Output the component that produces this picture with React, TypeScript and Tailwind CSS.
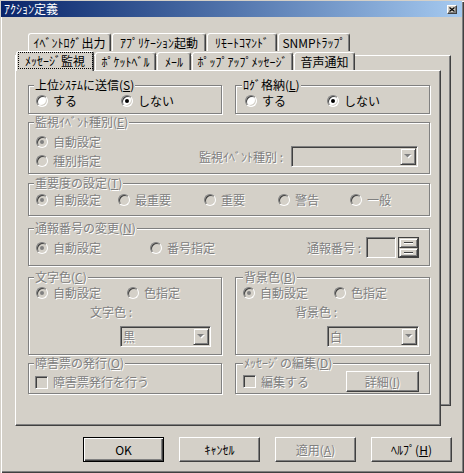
import React from 'react'

const dis = 'text-[#808080] [text-shadow:1px_1px_0_#fff]'
const sunken =
  'border border-t-[#808080] border-l-[#808080] border-r-white border-b-white shadow-[inset_1px_1px_0_#404040,inset_-1px_-1px_0_#d4d0c8]'
const raised =
  'border border-t-white border-l-white border-r-[#404040] border-b-[#404040] shadow-[inset_-1px_-1px_0_#808080]'
const scrollBtn =
  'border border-t-[#d4d0c8] border-l-[#d4d0c8] border-r-[#404040] border-b-[#404040] shadow-[inset_1px_1px_0_#fff,inset_-1px_-1px_0_#808080]'

const U = ({ c }: { c: string }) => <span className="underline underline-offset-1">{c}</span>

function Radio({
  label,
  checked = false,
  disabled = false,
  className = '',
}: {
  label: string
  checked?: boolean
  disabled?: boolean
  className?: string
}) {
  return (
    <div className={`flex h-[14px] shrink-0 items-center ${className}`}>
      <span
        className={`flex h-[12px] w-[12px] shrink-0 items-center justify-center rounded-full ${sunken} ${
          disabled ? 'bg-[#d4d0c8]' : 'bg-white'
        }`}
      >
        {checked && <span className={`h-[4px] w-[4px] rounded-full ${disabled ? 'bg-[#808080]' : 'bg-black'}`} />}
      </span>
      <span className={`ml-[5px] whitespace-nowrap ${disabled ? dis : ''}`}>{label}</span>
    </div>
  )
}

function Check({ label, className = '' }: { label: string; className?: string }) {
  return (
    <div className={`flex h-[14px] shrink-0 items-center ${className}`}>
      <span className={`h-[13px] w-[13px] shrink-0 bg-[#d4d0c8] ${sunken}`} />
      <span className={`ml-[5px] whitespace-nowrap ${dis}`}>{label}</span>
    </div>
  )
}

function Group({
  label,
  disabled = true,
  className = '',
  labelPos = 'left-[5px]',
  children,
}: {
  label: React.ReactNode
  disabled?: boolean
  className?: string
  labelPos?: string
  children?: React.ReactNode
}) {
  return (
    <div className={`relative shrink-0 border border-[#808080] shadow-[inset_1px_1px_0_#fff,1px_1px_0_#fff] ${className}`}>
      <span className={`absolute -top-[8px] ${labelPos} whitespace-nowrap bg-[#d4d0c8] px-[1px] ${disabled ? dis : ''}`}>
        {label}
      </span>
      {children}
    </div>
  )
}

function Arrow() {
  return (
    <svg width="8" height="5" viewBox="0 0 8 5">
      <polygon points="1,1 8,1 4.5,4.5" fill="#fff" />
      <polygon points="0,0 7,0 3.5,3.5" fill="#808080" />
    </svg>
  )
}

function Combo({ value = '', className = '' }: { value?: string; className?: string }) {
  return (
    <div className={`flex h-[21px] shrink-0 bg-[#d4d0c8] p-[1px] ${sunken} ${className}`}>
      <span className={`flex-1 pl-[1px] leading-[17px] ${dis}`}>{value}</span>
      <span className={`flex h-[17px] w-[16px] items-center justify-center ${scrollBtn}`}>
        <Arrow />
      </span>
    </div>
  )
}

function Tab({ label, className = '' }: { label: string; className?: string }) {
  return (
    <div
      className={`flex h-[18px] shrink-0 items-center justify-center rounded-t-[3px] border-t border-l border-r border-t-white border-l-white border-r-[#404040] bg-[#d4d0c8] shadow-[inset_-1px_0_0_#808080] whitespace-nowrap ${className}`}
    >
      {label}
    </div>
  )
}

function Button({ children, isDefault = false, disabled = false }: { children: React.ReactNode; isDefault?: boolean; disabled?: boolean }) {
  return (
    <div
      className={`flex h-[25px] w-[81px] items-center justify-center ${
        isDefault
          ? 'border border-black shadow-[inset_1px_1px_0_#fff,inset_-1px_-1px_0_#404040,inset_-2px_-2px_0_#808080]'
          : raised
      } ${disabled ? dis : ''}`}
    >
      {children}
    </div>
  )
}

export default function App() {
  return (
    <div className="relative h-[473px] w-[464px] overflow-hidden bg-[#d4d0c8] font-['Noto_Sans_CJK_JP',sans-serif] text-[12px] leading-[14px] text-black shadow-[inset_1px_1px_0_#d4d0c8,inset_2px_2px_0_#fff,inset_-1px_-1px_0_#404040,inset_-2px_-2px_0_#808080]">
      {/* title bar */}
      <div className="mt-[1px] mr-[2px] ml-[1px] flex h-[16px] items-center justify-between bg-linear-to-r from-[#0a246a] to-[#a6caf0] pr-[5px] pl-[3px]">
        <span className="text-white">ｱｸｼｮﾝ定義</span>
        <div className={`flex h-[9px] w-[10px] items-center justify-center bg-[#d4d0c8] ${raised}`}>
          <svg width="6" height="5" viewBox="0 0 6 5">
            <path d="M0.5 0.5L5.5 4.5M5.5 0.5L0.5 4.5" stroke="#000" strokeWidth="1.2" />
          </svg>
        </div>
      </div>

      <div className="mt-[16px] pl-[15px]">
        {/* back row of tabs */}
        <div className="ml-[13px] flex h-[18px] gap-[1px]">
          <Tab label="ｲﾍﾞﾝﾄﾛｸﾞ出力" className="w-[83px]" />
          <Tab label="ｱﾌﾟﾘｹｰｼｮﾝ起動" className="w-[94px]" />
          <Tab label="ﾘﾓｰﾄｺﾏﾝﾄﾞ" className="w-[70px]" />
          <Tab label="SNMPﾄﾗｯﾌﾟ" className="w-[72px]" />
        </div>

        <div className="relative">
          {/* page behind */}
          <div className="absolute top-[4px] bottom-[20px] left-0 w-[436px] border border-t-white border-l-white border-r-[#404040] border-b-[#404040] shadow-[inset_-1px_-1px_0_#808080]" />

          {/* front row of tabs */}
          <div className="relative ml-[1px] flex h-[19px] items-end gap-[1px]">
            <div className="relative z-10 -mb-[1px] flex h-[20px] w-[78px] shrink-0 justify-center rounded-t-[3px] border-t border-l border-r border-t-white border-l-white border-r-[#404040] bg-[#d4d0c8] shadow-[inset_-1px_0_0_#808080]">
              <span className="flex h-[17px] w-[75px] items-center justify-center border border-dotted border-black whitespace-nowrap">
                ﾒｯｾｰｼﾞ監視
              </span>
            </div>
            <Tab label="ﾎﾟｹｯﾄﾍﾞﾙ" className="w-[61px]" />
            <Tab label="ﾒｰﾙ" className="w-[34px]" />
            <Tab label="ﾎﾟｯﾌﾟｱｯﾌﾟﾒｯｾｰｼﾞ" className="w-[101px]" />
            <Tab label="音声通知" className="w-[61px]" />
          </div>

          {/* page */}
          <div className={`relative h-[356px] w-[426px] bg-[#d4d0c8] pt-[14px] pl-[12px] ${raised}`}>
            <div className="flex gap-[13px]">
              <Group
                disabled={false}
                label={
                  <>
                    上位ｼｽﾃﾑに送信(<U c="S" />)
                  </>
                }
                className="h-[29px] w-[194px] pt-[8px] pl-[7px]"
              >
                <div className="flex">
                  <Radio label="する" className="w-[85px]" />
                  <Radio label="しない" checked />
                </div>
              </Group>
              <Group
                disabled={false}
                labelPos="left-[6px]"
                label={
                  <>
                    ﾛｸﾞ格納(<U c="L" />)
                  </>
                }
                className="h-[29px] w-[195px] pt-[8px] pl-[9px]"
              >
                <div className="flex">
                  <Radio label="する" className="w-[82px]" />
                  <Radio label="しない" checked />
                </div>
              </Group>
            </div>

            <Group
              label={
                <>
                  監視ｲﾍﾞﾝﾄ種別(<U c="E" />)
                </>
              }
              className="mt-[8px] flex h-[52px] w-[402px] pt-[12px] pl-[7px]"
            >
              <div className="flex w-[163px] flex-col gap-[5px]">
                <Radio label="自動設定" checked disabled />
                <Radio label="種別指定" disabled />
              </div>
              <div className="mt-[11px] flex h-[21px] items-center">
                <span className={`w-[92px] whitespace-nowrap ${dis}`}>監視ｲﾍﾞﾝﾄ種別 :</span>
                <Combo className="w-[127px]" />
              </div>
            </Group>

            <Group
              label={
                <>
                  重要度の設定(<U c="T" />)
                </>
              }
              className="mt-[9px] flex h-[33px] w-[402px] pt-[9px] pl-[7px]"
            >
              <Radio label="自動設定" checked disabled className="w-[82px]" />
              <Radio label="最重要" disabled className="w-[86px]" />
              <Radio label="重要" disabled className="w-[74px]" />
              <Radio label="警告" disabled className="w-[72px]" />
              <Radio label="一般" disabled />
            </Group>

            <Group
              label={
                <>
                  通報番号の変更(<U c="N" />)
                </>
              }
              className="mt-[12px] h-[38px] w-[402px] pt-[8px] pr-[10px] pl-[7px]"
            >
              <div className="flex h-[21px] items-center">
                <Radio label="自動設定" checked disabled className="w-[114px]" />
                <Radio label="番号指定" disabled />
                <span className={`ml-auto whitespace-nowrap ${dis}`}>通報番号 :</span>
                <span className={`ml-[5px] h-[21px] w-[30px] bg-[#d4d0c8] ${sunken}`} />
                <div className="ml-[2px] flex h-[21px] w-[21px] flex-col border border-[#404040]">
                  <span className={`flex h-[10px] items-center justify-center ${scrollBtn}`}>
                    <span className="h-[2px] w-[9px] border-t border-b border-t-[#404040] border-b-white" />
                  </span>
                  <span className={`flex h-[9px] items-center justify-center ${scrollBtn}`}>
                    <span className="h-[2px] w-[9px] border-t border-b border-t-[#404040] border-b-white" />
                  </span>
                </div>
              </div>
            </Group>

            <div className="mt-[11px] flex gap-[13px]">
              <Group
                label={
                  <>
                    文字色(<U c="C" />)
                  </>
                }
                className="h-[78px] w-[194px] pt-[8px] pl-[7px]"
              >
                <div className="flex">
                  <Radio label="自動設定" checked disabled className="w-[91px]" />
                  <Radio label="色指定" disabled />
                </div>
                <div className={`mt-[5px] ml-[54px] ${dis}`}>文字色 :</div>
                <Combo value="黒" className="mt-[7px] ml-[84px] w-[91px]" />
              </Group>
              <Group
                labelPos="left-[7px]"
                label={
                  <>
                    背景色(<U c="B" />)
                  </>
                }
                className="h-[78px] w-[195px] pt-[8px] pl-[7px]"
              >
                <div className="flex">
                  <Radio label="自動設定" checked disabled className="w-[91px]" />
                  <Radio label="色指定" disabled />
                </div>
                <div className={`mt-[5px] ml-[52px] ${dis}`}>背景色 :</div>
                <Combo value="白" className="mt-[7px] ml-[84px] w-[92px]" />
              </Group>
            </div>

            <div className="mt-[8px] flex gap-[13px]">
              <Group
                label={
                  <>
                    障害票の発行(<U c="O" />)
                  </>
                }
                className="h-[31px] w-[194px] pt-[11px] pl-[6px]"
              >
                <Check label="障害票発行を行う" />
              </Group>
              <Group
                labelPos="left-[7px]"
                label={
                  <>
                    ﾒｯｾｰｼﾞの編集(<U c="D" />)
                  </>
                }
                className="flex h-[31px] w-[195px] pt-[7px] pr-[10px] pl-[7px]"
              >
                <div className="flex h-[21px] w-full items-center">
                  <Check label="編集する" />
                  <div className={`ml-auto flex h-[21px] w-[73px] items-center justify-center ${raised} ${dis}`}>
                    詳細(<U c="I" />)
                  </div>
                </div>
              </Group>
            </div>
          </div>
        </div>
      </div>

      {/* dialog buttons */}
      <div className="mt-[11px] flex gap-[15px] pl-[83px]">
        <Button isDefault>OK</Button>
        <Button>ｷｬﾝｾﾙ</Button>
        <Button disabled>
          適用(<U c="A" />)
        </Button>
        <Button>
          ﾍﾙﾌﾟ(<U c="H" />)
        </Button>
      </div>
    </div>
  )
}
